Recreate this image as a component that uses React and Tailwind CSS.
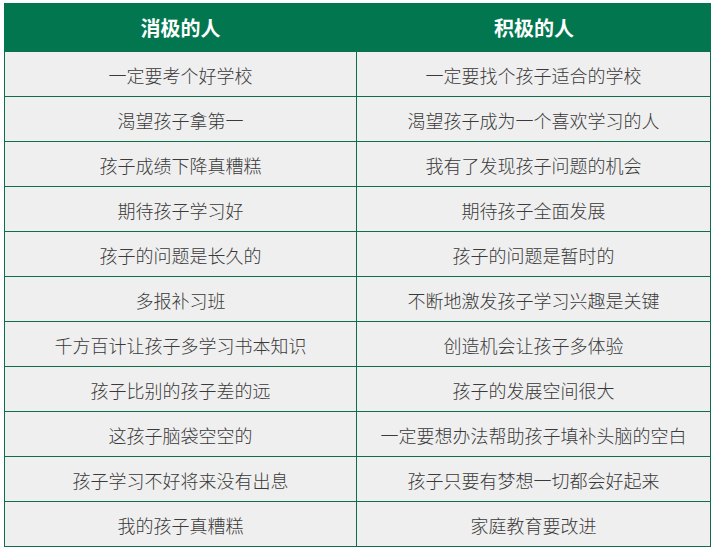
const rows = [
  ["一定要考个好学校", "一定要找个孩子适合的学校"],
  ["渴望孩子拿第一", "渴望孩子成为一个喜欢学习的人"],
  ["孩子成绩下降真糟糕", "我有了发现孩子问题的机会"],
  ["期待孩子学习好", "期待孩子全面发展"],
  ["孩子的问题是长久的", "孩子的问题是暂时的"],
  ["多报补习班", "不断地激发孩子学习兴趣是关键"],
  ["千方百计让孩子多学习书本知识", "创造机会让孩子多体验"],
  ["孩子比别的孩子差的远", "孩子的发展空间很大"],
  ["这孩子脑袋空空的", "一定要想办法帮助孩子填补头脑的空白"],
  ["孩子学习不好将来没有出息", "孩子只要有梦想一切都会好起来"],
  ["我的孩子真糟糕", "家庭教育要改进"],
];

export default function App() {
  return (
    <div className="w-[715px] h-[551px] bg-white pt-[3px] pl-[4px]" style={{ fontFamily: '"Microsoft YaHei", "Noto Sans CJK SC", sans-serif' }}>
      <div className="w-[707px] border-b border-[#0f6e4a]">
        <div className="flex h-[48px] bg-[#02774f] text-white font-bold text-[20px] pt-[2px]">
          <div className="w-[353px] flex items-center justify-center">消极的人</div>
          <div className="flex-1 flex items-center justify-center">积极的人</div>
        </div>
        {rows.map(([a, b], i) => (
          <div key={i} className="flex h-[45px] bg-[#efefef] text-[#3a3a3a] text-[18px] font-light border-t border-[#0f6e4a]">
            <div className="w-[353px] flex items-center justify-center pt-[2px] border-l border-r border-[#0f6e4a]">{a}</div>
            <div className="flex-1 flex items-center justify-center pt-[2px] border-r border-[#0f6e4a]">{b}</div>
          </div>
        ))}
      </div>
    </div>
  );
}
